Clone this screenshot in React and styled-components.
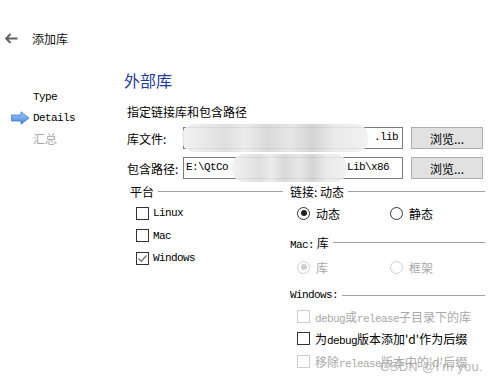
import styled, { createGlobalStyle } from 'styled-components'

const Global = createGlobalStyle`
  body {
    margin: 0;
    background: #fff;
    font-family: "Noto Sans CJK SC", "Liberation Sans", sans-serif;
    font-size: 12px;
    color: #000;
  }
`;

function BackArrow() {
  return (
    <svg width="13" height="11" viewBox="0 0 13 11">
      <path d="M1 5.5 H12.5 M5.5 1 L1 5.5 L5.5 10" fill="none" stroke="#606060" strokeWidth="1.8" />
    </svg>
  );
}

function BlueArrow() {
  return (
    <svg width="19" height="14" viewBox="0 0 19 14">
      <defs>
        <linearGradient id="ba" x1="0" y1="0" x2="0" y2="1">
          <stop offset="0" stopColor="#a8cdf5" />
          <stop offset="1" stopColor="#3d86dc" />
        </linearGradient>
      </defs>
      <path d="M0.5 4 H10 V0.8 L18 7 L10 13.2 V10 H0.5 Z" fill="url(#ba)" stroke="#3a7bd0" strokeWidth="0.8" />
    </svg>
  );
}

function App() {
  return (
    <>
      <Global />
      <Header>
        <BackArrow />
        <HeaderTitle>添加库</HeaderTitle>
      </Header>
      <Body>
        <Sidebar>
          <Step>
            <StepIcon />
            <Lat>Type</Lat>
          </Step>
          <Step>
            <StepIcon>
              <BlueArrow />
            </StepIcon>
            <Lat>Details</Lat>
          </Step>
          <Step muted>
            <StepIcon />
            汇总
          </Step>
        </Sidebar>
        <Content>
          <Heading>外部库</Heading>
          <Subtitle>指定链接库和包含路径</Subtitle>
          <FormRow>
            <Label>库文件:</Label>
            <PathInput>
              <Blur style={{ left: -2, width: 186 }} />
              <PathText style={{ right: 4 }}>.lib</PathText>
            </PathInput>
            <Button>浏览...</Button>
          </FormRow>
          <FormRow gapTop>
            <Label>包含路径:</Label>
            <PathInput>
              <PathText style={{ left: 2 }}>E:\QtCo</PathText>
              <Blur style={{ left: 48, width: 115 }} />
              <PathText style={{ left: 163 }}>Lib\x86</PathText>
            </PathInput>
            <Button>浏览...</Button>
          </FormRow>
          <Groups>
            <Column>
              <GroupTitle>
                <span>平台</span>
                <Line />
              </GroupTitle>
              <CheckList>
                <CheckRow>
                  <Box />
                  <Lat>Linux</Lat>
                </CheckRow>
                <CheckRow>
                  <Box />
                  <Lat>Mac</Lat>
                </CheckRow>
                <CheckRow>
                  <Box checked>
                    <svg width="11" height="11" viewBox="0 0 11 11">
                      <path d="M1.5 5.5 L4.2 8.2 L9.5 2.5" fill="none" stroke="#707070" strokeWidth="1.3" />
                    </svg>
                  </Box>
                  <Lat>Windows</Lat>
                </CheckRow>
              </CheckList>
            </Column>
            <Column>
              <GroupTitle>
                <span>链接: 动态</span>
                <Line />
              </GroupTitle>
              <RadioRow h={30}>
                <RadioItem>
                  <Radio checked />
                  动态
                </RadioItem>
                <RadioItem>
                  <Radio />
                  静态
                </RadioItem>
              </RadioRow>
              <GroupTitle top={7}>
                <span>
                  <Lat>Mac:</Lat> 库
                </span>
                <Line />
              </GroupTitle>
              <RadioRow h={36}>
                <RadioItem disabled>
                  <Radio checked disabled />
                  库
                </RadioItem>
                <RadioItem disabled>
                  <Radio disabled />
                  框架
                </RadioItem>
              </RadioRow>
              <GroupTitle top={3}>
                <Lat>Windows:</Lat>
                <Line />
              </GroupTitle>
              <WinList>
                <WinRow disabled>
                  <Box disabled />
                  <span>
                    <Lat>debug</Lat>或<Lat>release</Lat>子目录下的库
                  </span>
                </WinRow>
                <WinRow>
                  <Box />
                  <span>
                    为<Lat>debug</Lat>版本添加'd'作为后缀
                  </span>
                </WinRow>
                <WinRow disabled>
                  <Box disabled />
                  <span>
                    移除<Lat>release</Lat>版本中的'd'后缀
                  </span>
                </WinRow>
              </WinList>
            </Column>
          </Groups>
        </Content>
      </Body>
      <Watermark>CSDN @I'm you.</Watermark>
    </>
  );
}

export default App

const Lat = styled.span`
  font-family: "Liberation Mono", monospace;
  font-size: 11px;
  letter-spacing: -0.6px;
`;

const Header = styled.div`
  display: flex;
  align-items: center;
  height: 20px;
  margin-top: 28px;
  padding-left: 5px;
  gap: 14px;
`;

const HeaderTitle = styled.div`
  font-size: 12px;
  color: #111;
`;

const Body = styled.div`
  display: flex;
`;

const Sidebar = styled.div`
  flex: 0 0 113px;
  padding-left: 11px;
  padding-top: 38px;
  display: flex;
  flex-direction: column;
`;

const Step = styled.div`
  display: flex;
  align-items: center;
  height: 21px;
  color: ${(p) => (p.muted ? '#a8a8a8' : '#000')};
`;

const StepIcon = styled.div`
  width: 22px;
  display: flex;
  align-items: center;
`;

const Content = styled.div`
  flex: 1;
  min-width: 0;
  padding-top: 22px;
  padding-right: 9px;
  display: flex;
  flex-direction: column;
`;

const Heading = styled.div`
  font-size: 16px;
  line-height: 20px;
  color: #1a3c9e;
`;

const Subtitle = styled.div`
  margin-top: 14px;
  padding-left: 3px;
  line-height: 16px;
`;

const FormRow = styled.div`
  display: grid;
  grid-template-columns: 56px 220px 80px;
  align-items: center;
  height: 22px;
  margin-top: ${(p) => (p.gapTop ? '8px' : '7px')};
  padding-left: 3px;
`;

const Label = styled.div`
  white-space: nowrap;
`;

const PathInput = styled.div`
  position: relative;
  height: 20px;
  border: 1px solid #7a7a7a;
  background: #fff;
`;

const PathText = styled.span`
  position: absolute;
  top: 3px;
  font-family: "Liberation Mono", monospace;
  font-size: 11px;
  letter-spacing: -0.6px;
`;

const Blur = styled.div`
  position: absolute;
  top: -4px;
  height: 28px;
  border-radius: 12px;
  background: linear-gradient(
    90deg,
    #f2f2f2 0%,
    #e6e6e6 12%,
    #dcdcdc 24%,
    #eaeaea 34%,
    #d5d5d5 46%,
    #e4e4e4 58%,
    #d0d0d0 70%,
    #e8e8e8 82%,
    #f0f0f0 100%
  );
  opacity: 0.9;
`;

const Button = styled.div`
  height: 20px;
  border: 1px solid #adadad;
  background: #e1e1e1;
  display: flex;
  align-items: center;
  justify-content: center;
  margin-left: 8px;
`;

const Groups = styled.div`
  display: grid;
  grid-template-columns: 153px 1fr;
  column-gap: 7px;
  margin-top: 5px;
  padding-left: 6px;
  margin-right: -2px;
`;

const Column = styled.div`
  display: flex;
  flex-direction: column;
`;

const GroupTitle = styled.div`
  display: flex;
  align-items: center;
  height: 14px;
  margin-top: ${(p) => p.top || 0}px;
  white-space: nowrap;
`;

const Line = styled.div`
  flex: 1;
  height: 1px;
  background: #a0a0a0;
  margin-left: 4px;
`;

const CheckList = styled.div`
  margin-top: 4px;
  padding-left: 6px;
`;

const CheckRow = styled.div`
  display: flex;
  align-items: center;
  gap: 4px;
  height: 22.5px;
`;

const Box = styled.div`
  width: 11px;
  height: 11px;
  border: 1px solid ${(p) => (p.disabled ? '#cccccc' : '#333')};
  background: #fff;
  display: flex;
  align-items: center;
  justify-content: center;
  flex-shrink: 0;
`;

const RadioRow = styled.div`
  display: flex;
  align-items: center;
  height: ${(p) => p.h}px;
  padding-left: 7px;
`;

const RadioItem = styled.div`
  width: 93px;
  display: flex;
  align-items: center;
  gap: 6px;
  color: ${(p) => (p.disabled ? '#a8a8a8' : '#000')};
`;

const Radio = styled.div`
  width: 11px;
  height: 11px;
  border-radius: 50%;
  border: 1px solid ${(p) => (p.disabled ? '#cfcfcf' : '#333')};
  position: relative;
  &::after {
    content: '';
    display: ${(p) => (p.checked ? 'block' : 'none')};
    position: absolute;
    left: 2.5px;
    top: 2.5px;
    width: 6px;
    height: 6px;
    border-radius: 50%;
    background: ${(p) => (p.disabled ? '#cfcfcf' : '#222')};
  }
`;

const WinList = styled.div`
  margin-top: 3px;
  padding-left: 7px;
`;

const WinRow = styled.div`
  display: flex;
  align-items: center;
  gap: 5px;
  height: 22.5px;
  white-space: nowrap;
  color: ${(p) => (p.disabled ? '#a8a8a8' : '#000')};
`;

const Watermark = styled.div`
  position: absolute;
  left: 380px;
  top: 359px;
  font-family: "Liberation Sans", sans-serif;
  font-size: 13px;
  color: rgba(160, 160, 160, 0.75);
  letter-spacing: 0.3px;
`;
